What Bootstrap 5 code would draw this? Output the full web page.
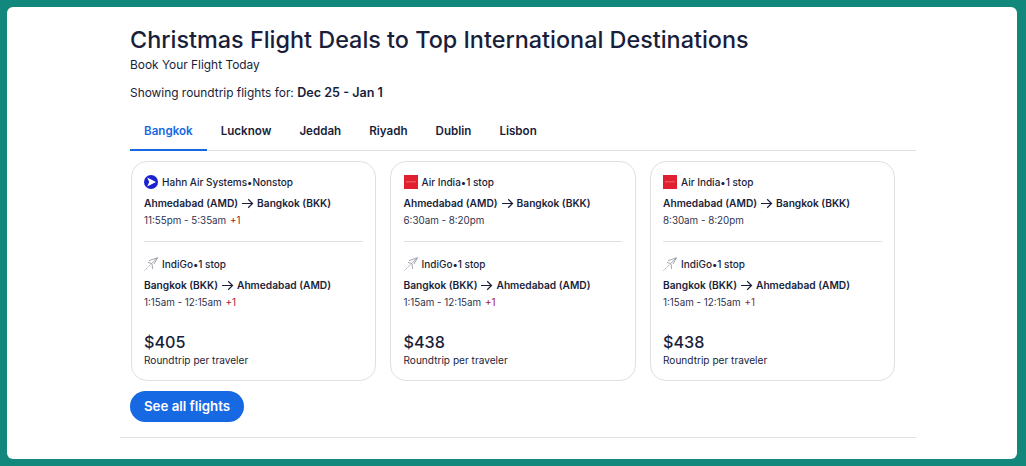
<!DOCTYPE html>
<html lang="en">
<head>
  <meta charset="UTF-8">
  <title>Christmas Flight Deals</title>
  <link href="https://cdn.jsdelivr.net/npm/bootstrap@5.3.2/dist/css/bootstrap.min.css" rel="stylesheet">
  <style>
    html, body { height: 100%; }
    body { background: #12877b; padding: 7px 9px 7px 7px; font-family: "Inter", sans-serif; color: #191e3b; overflow: hidden; }
    .panel-main { background: #fff; height: 452px; border-radius: 6px; padding: 16px 101px 0 123px; }
    .deal-title { font-size: 23.4px; line-height: 33px; font-weight: 500; margin: 0; color: #191e3b; }
    .deal-sub { font-size: 11.9px; line-height: 18px; margin: 0 0 10px 0; }
    .deal-show { font-size: 11.9px; line-height: 18px; margin: 0 0 11px 0; }
    .deal-show b { font-size: 12.6px; font-weight: 600; }
    .city-tabs { border-bottom: 1px solid #dfe0e4; height: 38px; margin-bottom: 10px; }
    .city-tabs .nav-link { color: #191e3b; font-size: 11.6px; font-weight: 600; padding: 10px 14px 0; height: 38px; border: 0; border-radius: 0; }
    .city-tabs .nav-link.active { color: #1668e3; border-bottom: 2px solid #1668e3; }
    .flight-row { gap: 14px; padding-left: .5px; }
    .flight-card { width: 245.5px; height: 220px; border: 1px solid #dfe0e4; border-radius: 16px; padding: 12px 12.5px; }
    .leg-head { height: 16px; font-size: 10px; font-weight: 500; gap: 4px; margin-bottom: 5px; }
    .leg-route { font-size: 10.2px; line-height: 16px; font-weight: 600; gap: 3px; margin-bottom: 2px; }
    .leg-time { font-size: 9.8px; line-height: 16px; color: #2d3250; }
    .next-day { color: #a5162d; margin-left: 1px; }
    .leg-line { margin: 12px 0 14px; border-top: 1px solid #dfe0e4; opacity: 1; }
    .fare-price { font-size: 16.2px; line-height: 22px; font-weight: 500; margin-top: 20px; }
    .fare-note { font-size: 10.1px; line-height: 14px; }
    .btn-flights { background: #1668e3; color: #fff; font-size: 13.3px; font-weight: 600; border: 0; border-radius: 16px; width: 114px; height: 31px; padding: 0; margin-top: 10px; }
    .btn-flights:hover { background: #1668e3; color: #fff; }
    .end-line { margin: 15px 0 0 -10px; border-top: 1px solid #dfe0e4; opacity: 1; }
  </style>
</head>
<body>
  <div class="panel-main">
    <h1 class="deal-title">Christmas Flight Deals to Top International Destinations</h1>
    <p class="deal-sub">Book Your Flight Today</p>
    <p class="deal-show">Showing roundtrip flights for: <b>Dec 25 - Jan 1</b></p>

    <ul class="nav city-tabs">
      <li class="nav-item"><a class="nav-link active" href="#">Bangkok</a></li>
      <li class="nav-item"><a class="nav-link" href="#">Lucknow</a></li>
      <li class="nav-item"><a class="nav-link" href="#">Jeddah</a></li>
      <li class="nav-item"><a class="nav-link" href="#">Riyadh</a></li>
      <li class="nav-item"><a class="nav-link" href="#">Dublin</a></li>
      <li class="nav-item"><a class="nav-link" href="#">Lisbon</a></li>
    </ul>

    <div class="d-flex flight-row" id="cards"></div>

    <button class="btn btn-flights" type="button">See all flights</button>
    <hr class="end-line">
  </div>

  <script>
    const arrow = '<svg width="13" height="11" viewBox="0 0 13 11" fill="none" stroke="#191e3b" stroke-width="1.2"><path d="M1 5.5h10.5M7.2 1.3l4.3 4.2-4.3 4.2"/></svg>';
    const hahn = '<svg width="14" height="14" viewBox="0 0 14 14"><circle cx="7" cy="7" r="7" fill="#1a22d0"/><path d="M3.2 2.6L12 7l-8.8 4.4L5.2 7z" fill="#fff"/></svg>';
    const airIndia = '<svg width="14" height="14" viewBox="0 0 14 14"><rect width="14" height="14" fill="#e0202e"/><path d="M2 6.8h10" stroke="#f5a0a0" stroke-width=".6"/></svg>';
    const indigo = '<svg width="14" height="14" viewBox="0 0 14 14" fill="none" stroke="#8d8f9c" stroke-width=".8"><path d="M.5 13.5L8 6.2" stroke-dasharray="1.4 .8"/><path d="M8 6.2L13.5 .8M13.5 .8L10 7M13.5 .8L5 3.6M7.5 6.5L4 5.4M8 7l.7 5"/></svg>';

    const flights = [
      { logo: hahn, air: 'Hahn Air Systems', stop: 'Nonstop', time: '11:55pm - 5:35am', plus: true, price: '$405' },
      { logo: airIndia, air: 'Air India', stop: '1 stop', time: '6:30am - 8:20pm', plus: false, price: '$438' },
      { logo: airIndia, air: 'Air India', stop: '1 stop', time: '8:30am - 8:20pm', plus: false, price: '$438' }
    ];

    document.getElementById('cards').innerHTML = flights.map(f => `
      <div class="flight-card">
        <div class="d-flex align-items-center leg-head">${f.logo}<span>${f.air}•${f.stop}</span></div>
        <div class="d-flex align-items-center leg-route"><span>Ahmedabad (AMD)</span>${arrow}<span>Bangkok (BKK)</span></div>
        <div class="leg-time">${f.time}${f.plus ? ' <span class="next-day">+1</span>' : ''}</div>
        <hr class="leg-line">
        <div class="d-flex align-items-center leg-head">${indigo}<span>IndiGo•1 stop</span></div>
        <div class="d-flex align-items-center leg-route"><span>Bangkok (BKK)</span>${arrow}<span>Ahmedabad (AMD)</span></div>
        <div class="leg-time">1:15am - 12:15am <span class="next-day">+1</span></div>
        <div class="fare-price">${f.price}</div>
        <div class="fare-note">Roundtrip per traveler</div>
      </div>`).join('');
  </script>
  <script src="https://cdn.jsdelivr.net/npm/bootstrap@5.3.2/dist/js/bootstrap.bundle.min.js"></script>
</body>
</html>
